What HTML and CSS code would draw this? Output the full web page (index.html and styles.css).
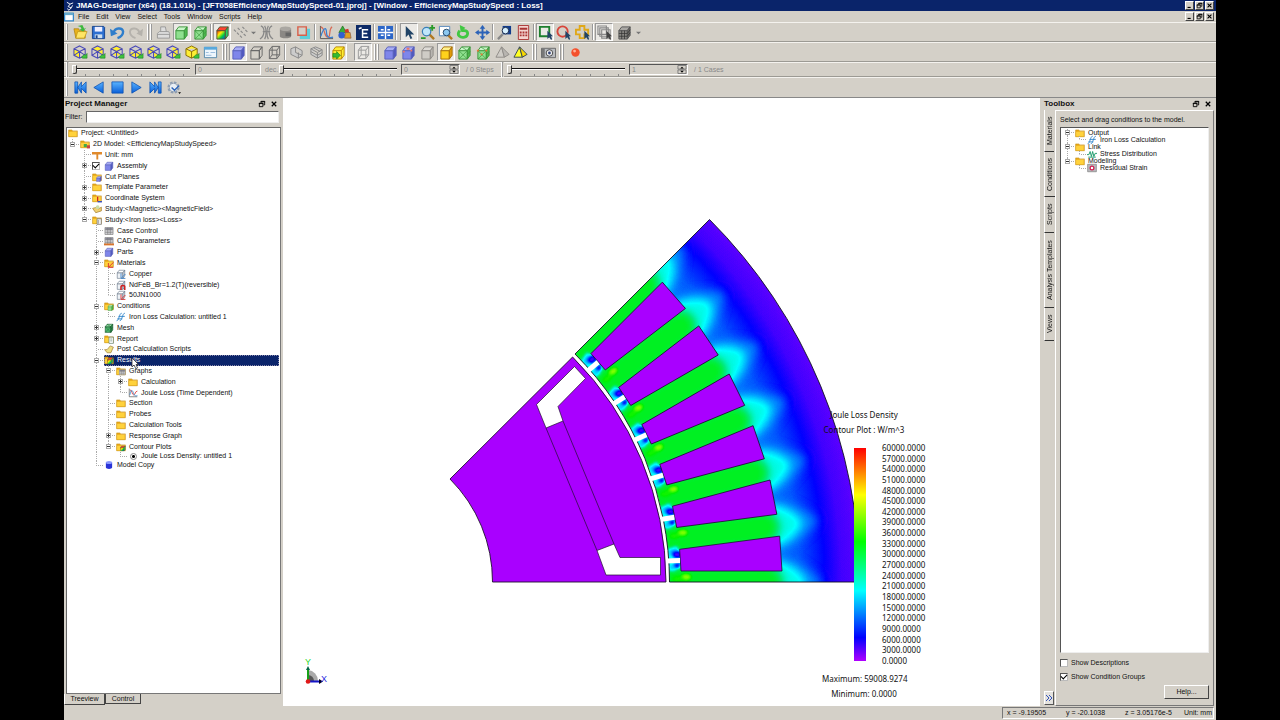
FILE: index.html
```html
<!DOCTYPE html>
<html lang="en">
<head>
<meta charset="utf-8">
<title>JMAG-Designer</title>
<link rel="stylesheet" href="styles.css">
</head>
<body>
<svg class="defs" aria-hidden="true">
  <defs>
    <linearGradient id="rain" x1="0" y1="0" x2="1" y2="1"><stop offset="0" stop-color="#f20"/><stop offset=".35" stop-color="#fe0"/><stop offset=".65" stop-color="#0c4"/><stop offset="1" stop-color="#04f"/></linearGradient>
    <linearGradient id="playfill" x1="0" y1="0" x2="0" y2="1"><stop offset="0" stop-color="#5ab4ff"/><stop offset="1" stop-color="#0a5fd8"/></linearGradient>
    <symbol id="cube" viewBox="0 0 16 16"><g stroke="currentColor" stroke-width="1" stroke-linejoin="round"><path fill="var(--f)" d="M2 6h9v9H2z"/><path fill="var(--t)" d="M2 6l3-4h9l-3 4z"/><path fill="var(--s)" d="M11 6l3-4v9l-3 4z"/></g></symbol>
    <symbol id="xcube" viewBox="0 0 16 16"><g stroke="currentColor" stroke-width="1" stroke-linejoin="round"><path fill="var(--f)" d="M2 6h9v9H2z"/><path fill="var(--t)" d="M2 6l3-4h9l-3 4z"/><path fill="var(--s)" d="M11 6l3-4v9l-3 4z"/><path fill="none" stroke-width=".7" d="M2 6l9 9M11 6l-9 9M5 2l6 4M11 10l3-3"/></g></symbol>
    <symbol id="wire" viewBox="0 0 16 16"><path fill="none" stroke="currentColor" d="M2.500 5.500h8v9h-8zM2.500 5.500l3-4h8l-3 4M13.500 1.500v9l-3 4M5.500 1.500v9h8M5.500 10.500l-3 4"/></symbol>
    <symbol id="hex" viewBox="0 0 16 16"><path fill="none" stroke="#4a4ab8" stroke-width="1.100" d="M7 1l6 3v7l-6 3-6-3V4zM7 7L1 4M7 7l6-3M7 7v7M1 11l6-4 6 4"/><path fill="#3fc43f" stroke="#1c7f1c" stroke-width=".6" d="M9 13l3-3 1 1 2-2v5h-5z"/></symbol>
    <symbol id="folder" viewBox="0 0 16 16"><path fill="#e8a818" d="M1 3h5l2 2h7v9H1z"/><path fill="#ffd23c" d="M1 6h13v8H1z"/><path fill="none" stroke="#c08a10" stroke-width=".8" d="M1 3h5l2 1.500h7V14H1z"/></symbol>
    <symbol id="grid" viewBox="0 0 16 16"><path fill="#d4d4d8" stroke="#777" d="M1.500 2.500h13v11h-13z"/><path fill="#889" d="M2 3h12v3H2z"/><path fill="none" stroke="#777" d="M2 6h12M2 10h12M6 2.500v11M10 2.500v11"/></symbol>
    <symbol id="fcurve" viewBox="0 0 16 16"><path fill="none" stroke="#38c" stroke-width="1.500" d="M1 14c4 0 4-12 8-12M6 14c4 0 4-12 8-12M4 7h10M2 11h8"/></symbol>
    <symbol id="mag" viewBox="0 0 16 16"><path stroke="#b07820" stroke-width="2.500" d="M10 10l5 5"/><circle cx="7" cy="7" r="4.500" fill="#bfe6fa" stroke="#3a7fb8" stroke-width="1.300"/></symbol>
    <symbol id="arrow" viewBox="0 0 16 16"><path fill="#246" d="M4 1v12l3-3 2 5 2-1-2-4h4z"/></symbol>
    <symbol id="cone" viewBox="0 0 16 16"><path fill="var(--f)" stroke="currentColor" d="M7 2L1 13h9z"/><path fill="var(--s)" stroke="currentColor" d="M7 2l3 11 5-3z"/></symbol>
    <symbol id="chart" viewBox="0 0 16 16"><path fill="#fff" d="M2 1h13v12H2z"/><path fill="none" stroke="#444" d="M2 1v13h13"/><path fill="none" stroke="#d33" stroke-width="1.300" d="M3 3c4 0 3 8 6 8s2-6 6-6"/><path fill="none" stroke="#38c" stroke-width="1.300" d="M3 11c2-12 5-6 6-2s4 4 6 3"/></symbol>
    <symbol id="restore" viewBox="0 0 9 9"><path fill="none" stroke="#000" d="M3.500 3V1.500h4v4H6M1.500 3.500h4v4h-4zM3 2h5M1 4h5"/></symbol>
    <symbol id="close" viewBox="0 0 9 9"><path stroke="#000" stroke-width="1.400" d="M2 2l5 5M7 2L2 7"/></symbol>
    <symbol id="min" viewBox="0 0 9 9"><path stroke="#000" stroke-width="1.500" d="M2 7h4"/></symbol>
    <symbol id="spin" viewBox="0 0 10 10"><path fill="#d4d0c8" stroke="#777" d="M.5.5h9v4h-9zM.5 5.500h9v4h-9z"/><path d="M3 4l2-2 2 2zM3 6.500l2 2 2-2z"/></symbol>
  </defs>
</svg>

<div class="app">
  <header class="title">
    <svg class="i10" viewBox="0 0 16 16"><path fill="none" stroke="#fff" stroke-width="1.500" d="M3 2l5 3 5-2M8 5l-3 4 5 2-4 4M12 7l-2 4M4 12l2 3"/></svg>
    <h1>JMAG-Designer (x64) (18.1.01k) - [JFT058EfficiencyMapStudySpeed-01.jproj] - [Window - EfficiencyMapStudySpeed : Loss]</h1>
    <div class="wctl">
      <button aria-label="Minimize"><svg><use href="#min"/></svg></button><button aria-label="Restore"><svg><use href="#restore"/></svg></button><button aria-label="Close"><svg><use href="#close"/></svg></button>
    </div>
  </header>
  <nav class="menu">
    <svg class="i10" viewBox="0 0 16 16"><path fill="#fff" stroke="#38c" stroke-width="2" d="M1 2h14v12H1z"/><path fill="#6ac" d="M1 1h14v4H1z"/></svg>
    <button>File</button><button>Edit</button><button>View</button><button>Select</button><button>Tools</button><button>Window</button><button>Scripts</button><button>Help</button>
    <div class="wctl">
      <button aria-label="Minimize"><svg><use href="#min"/></svg></button><button aria-label="Restore"><svg><use href="#restore"/></svg></button><button aria-label="Close"><svg><use href="#close"/></svg></button>
    </div>
  </nav>

  <div class="bar" role="toolbar" aria-label="Main">
    <i class="handle"></i>
    <div class="grp w74">
      <button aria-label="Open"><svg viewBox="0 0 16 16"><path fill="#e9b21c" stroke="#a87a08" stroke-width=".7" d="M1 4h5l1 2h6v8H3z"/><path fill="#ffe566" stroke="#b98f10" stroke-width=".7" d="M3 14l2-7h10l-3 7z"/><path fill="#3fb93f" d="M5 1l5-1 2 4 2-1-3 4-4-2 2-1-1-2z"/></svg></button>
      <button aria-label="Save"><svg viewBox="0 0 16 16"><path fill="#2c6fd0" stroke="#16428c" d="M1.500 1.500h12l1 1v12h-13z"/><path fill="#eef" d="M4 2h8v5H4z"/><path fill="#cde" d="M4 10h8v4H4z"/><path fill="#16428c" d="M5 11h2v3H5z"/></svg></button>
      <button aria-label="Undo"><svg viewBox="0 0 16 16"><path fill="none" stroke="#2f7ecb" stroke-width="2.500" d="M4 8c1-5 9-6 10-1 0 4-3 6-6 7"/><path fill="#2f7ecb" d="M0 4l1 8 7-3z"/></svg></button>
      <button aria-label="Redo"><svg viewBox="0 0 16 16"><path fill="none" stroke="#b5b2ac" stroke-width="2" d="M12 8C11 3 3 2 2 7c0 4 3 6 6 7"/><path fill="#b5b2ac" d="M16 4l-1 8-6-3z"/></svg></button>
    </div>
    <i class="handle wide"></i>
    <div class="grp w55">
      <button aria-label="Print"><svg viewBox="0 0 16 16"><path fill="#ddd" stroke="#999" d="M5 7V2h5l1 5M1.500 9l2-2h10l1 2v5h-13zM1.500 10h13"/></svg></button>
      <button class="on green" aria-label="Geometry"><svg><use href="#cube"/></svg></button>
      <button class="green" aria-label="Mesh"><svg><use href="#xcube"/></svg></button>
    </div>
    <i class="sep"></i>
    <div class="grp w100">
      <button class="on rain" aria-label="Contour"><svg><use href="#cube"/></svg></button>
      <button aria-label="Vectors"><svg viewBox="0 0 16 16"><path stroke="#888" stroke-width="1.200" stroke-dasharray="3 1.500" d="M1 5l9 9M5 3l9 9M10 2l6 6"/></svg></button>
      <button class="dd" aria-label="More"><svg viewBox="0 0 6 6"><path fill="#777" d="M0 2h6L3 5z"/></svg></button>
      <button aria-label="Flux lines"><svg viewBox="0 0 16 16"><path fill="none" stroke="#888" stroke-width="1.300" d="M2 1c5 2 4 11-1 14M14 1C9 3 10 12 15 15M6 1c2 3 2 11 0 14M10 1c-2 3-2 11 0 14M4 7h8"/></svg></button>
      <button aria-label="Section"><svg viewBox="0 0 16 16"><path fill="#8b8884" d="M2 4v8c0 3 12 3 12 0V4z"/><ellipse cx="8" cy="4" rx="6" ry="2.500" fill="#aaa7a2"/><path fill="#666" d="M8 8h6v4H8z"/></svg></button>
      <button aria-label="Region"><svg viewBox="0 0 16 16"><path fill="#5ecfd8" d="M4 4h11v11H4z"/><path fill="#d4d0c8" stroke="#d8604a" stroke-width="1.500" d="M2 2h9v9H2z"/></svg></button>
    </div>
    <i class="sep"></i>
    <div class="grp w55">
      <button aria-label="Graph"><svg viewBox="0 0 16 16"><path fill="none" stroke="#555" d="M1.500 1v13.500H15"/><path fill="none" stroke="#d86a55" stroke-width="1.300" d="M2 2c5 2 3 10 7 11s1-9 5-11"/><path fill="none" stroke="#3a7fd0" stroke-width="1.300" d="M2 12c3-10 6-10 6-4s4 6 7 5"/></svg></button>
      <button aria-label="Shapes"><svg viewBox="0 0 16 16"><path fill="#38b038" stroke="#176b17" stroke-width=".7" d="M6 1l4 7H2z"/><circle cx="5" cy="11" r="3.500" fill="#3060d0"/><path fill="#d03828" d="M8 5l4-1 1 4-4 1z"/><path fill="#e0a020" stroke="#854" stroke-width=".7" d="M9 8h5l1 6H8z"/></svg></button>
      <button aria-label="Express"><svg viewBox="0 0 16 16"><path fill="#0d2a66" d="M0 0h16v16H0z"/><path fill="none" stroke="#fff" stroke-width="1.600" d="M13 5H7v8h6M7 9h5M3 4l3-1"/></svg></button>
    </div>
    <i class="sep"></i>
    <div class="grp">
      <button aria-label="Fit"><svg viewBox="0 0 16 16"><path fill="#2c66c8" d="M0 1h16v14H0z"/><path fill="none" stroke="#fff" stroke-width="1.500" d="M8 1v14M0 8h16M3 5h3M10 5h3M3 11h3M10 11h3"/></svg></button>
    </div>
    <i class="sep big"></i>
    <div class="grp w91">
      <button class="on" aria-label="Select"><svg><use href="#arrow"/></svg></button>
      <button aria-label="Zoom"><svg viewBox="0 0 16 16"><use href="#mag"/><path stroke="#2a9a2a" stroke-width="2" d="M10 3h6M13 0v6M1 14h5"/></svg></button>
      <button aria-label="Zoom area"><svg viewBox="0 0 16 16"><path fill="#fff" stroke="#58b" d="M1.500 1.500h11v10h-11z"/><path stroke="#b07820" stroke-width="2.500" d="M11 11l4 4"/><circle cx="9" cy="8" r="3.500" fill="#8cc8f0" stroke="#246"/></svg></button>
      <button aria-label="Rotate"><svg viewBox="0 0 16 16"><path fill="none" stroke="#42c842" stroke-width="3" d="M4 6c-4 5 1 8 5 7s5-7 0-7H6"/><path fill="#42c842" d="M4 0l6 3-5 5z"/></svg></button>
      <button aria-label="Pan"><svg viewBox="0 0 16 16"><path fill="#2b62b8" d="M8 0l3 4H9v3h3V5l4 3-4 3V9H9v3h2l-3 4-3-4h2V9H4v2L0 8l4-3v2h3V4H5z"/></svg></button>
    </div>
    <i class="sep"></i>
    <div class="grp w37">
      <button aria-label="Probe"><svg viewBox="0 0 16 16"><path fill="#123c8c" d="M6 1h9v9H6z"/><path stroke="#888" stroke-width="2.500" d="M6 10l-5 5"/><circle cx="9" cy="6" r="3.500" fill="#d6f0ff" stroke="#124"/></svg></button>
      <button aria-label="Calculator"><svg viewBox="0 0 16 16"><path fill="#f3d3cf" stroke="#a33" d="M2.500.5h11v15h-11z"/><path fill="#a33" d="M4 3h8v2H4zM4 7h2v2H4zM7 7h2v2H7zM10 7h2v2h-2zM4 10h2v2H4zM7 10h2v2H7zM10 10h2v2h-2z"/></svg></button>
    </div>
    <i class="sep"></i>
    <div class="grp w55">
      <button class="on" aria-label="Box select"><svg viewBox="0 0 16 16"><path fill="none" stroke="#1d7f2e" stroke-width="2" d="M2 2h10v10H2z"/><path fill="#246" d="M10 6v9l2-2 2 3 1-1-1-3h2z"/></svg></button>
      <button aria-label="Circle select"><svg viewBox="0 0 16 16"><circle cx="7" cy="7" r="5.500" fill="none" stroke="#d8453a" stroke-width="2"/><path fill="#246" d="M10 6v9l2-2 2 3 1-1-1-3h2z"/></svg></button>
      <button aria-label="Polygon select"><svg viewBox="0 0 16 16"><path fill="none" stroke="#e0a818" stroke-width="2" d="M5 1h5v4h4v5h-4v4H5v-4H1V5h4z"/><path fill="#246" d="M10 6v9l2-2 2 3 1-1-1-3h2z"/></svg></button>
    </div>
    <i class="sep"></i>
    <div class="grp w46">
      <button class="on" aria-label="Visible only"><svg viewBox="0 0 16 16"><path fill="none" stroke="#888" stroke-width="1.200" d="M1 1h9v9H1zM3 3h9v9H3zM5 5h9v9H5z"/><path fill="#444" d="M10 6v9l2-2 2 3 1-1-1-3h2z"/></svg></button>
      <button class="dark" aria-label="Mesh view"><svg viewBox="0 0 16 16"><use href="#cube"/><path fill="none" stroke="#333" stroke-width=".8" d="M2 9h9l3-4M2 12h9l3-4M5 6v9M8 6v9"/></svg></button>
      <button class="dd" aria-label="More"><svg viewBox="0 0 6 6"><path fill="#777" d="M0 2h6L3 5z"/></svg></button>
    </div>
  </div>

  <div class="bar" role="toolbar" aria-label="View">
    <i class="handle"></i>
    <div class="grp w149">
      <button aria-label="Front"><svg viewBox="0 0 16 16"><path fill="#fe3" d="M1 4l6 3 6-3v7l-6 3V7v7l-6-3z"/><path fill="#d4d0c8" d="M7 7l6-3v7l-6 3z"/><use href="#hex"/></svg></button>
      <button aria-label="Back"><svg viewBox="0 0 16 16"><path fill="#fe3" d="M7 1l6 3v7L7 7 1 4z"/><use href="#hex"/></svg></button>
      <button aria-label="Top"><svg viewBox="0 0 16 16"><path fill="#fe3" d="M7 1l6 3-6 3-6-3zM3 10l4-3 4 3-4 2z"/><use href="#hex"/></svg></button>
      <button aria-label="Bottom"><svg viewBox="0 0 16 16"><path fill="#fe3" d="M1 11V8l6-1 6 1v3l-6 3z"/><use href="#hex"/></svg></button>
      <button aria-label="Left"><svg viewBox="0 0 16 16"><path fill="#fe3" d="M7 1v6l6 4-6 3V7l-6 4V4z"/><use href="#hex"/></svg></button>
      <button aria-label="Right"><svg viewBox="0 0 16 16"><path fill="#fe3" d="M7 2l6 2v7l-6 3z"/><use href="#hex"/></svg></button>
      <button aria-label="Isometric"><svg viewBox="0 0 16 16"><path fill="#fe3" stroke="#886b00" d="M7 1l6 3v7l-6 3-6-3V4zM1 4l6 3 6-3M7 7v7"/><path fill="#3fc43f" stroke="#1c7f1c" stroke-width=".6" d="M9 13l3-3 1 1 2-2v5h-5z"/></svg></button>
      <button aria-label="View list"><svg viewBox="0 0 16 16"><path fill="#eef6fc" stroke="#58a" d="M1.500 2.500h13v11h-13z"/><path fill="#58a8dc" d="M1 2h14v3H1z"/><path stroke="#9bd" d="M3 8h3M8 8h5M3 11h6"/></svg></button>
    </div>
    <i class="handle wide"></i>
    <div class="grp w54">
      <button class="on blue" aria-label="Shaded"><svg><use href="#cube"/></svg></button>
      <button class="clear" aria-label="Hidden line"><svg><use href="#cube"/></svg></button>
      <button class="clear" aria-label="Wireframe"><svg><use href="#wire"/></svg></button>
    </div>
    <i class="sep"></i>
    <div class="grp w38">
      <button class="gray" aria-label="Clip"><svg viewBox="0 0 16 16"><path fill="#ccc" stroke="#888" d="M2 4l5-2 7 4v5l-4 3-8-4zM7 2v6l7 3M10 8v6"/></svg></button>
      <button class="gray" aria-label="Clip mesh"><svg viewBox="0 0 16 16"><path fill="#ccc" stroke="#888" d="M2 4l5-2 7 3v6l-5 3-7-4zM2 4l7 4 5-3M9 8v6M2 7l7 4 5-3M5 3l7 4"/></svg></button>
    </div>
    <i class="sep"></i>
    <div class="grp w43">
      <button class="on" aria-label="Highlight"><svg viewBox="0 0 16 16"><path fill="#fe3" stroke="#b80" d="M2 6l3-4h9v9l-3 4H2zM11 6l3-4M2 6h9v9"/><path fill="#3b3" stroke="#171" stroke-width=".6" d="M2 9h4V7l4 4-4 4v-2H2z"/></svg></button>
      <button class="on clear faint" aria-label="Transparent"><svg><use href="#wire"/></svg></button>
    </div>
    <i class="handle wide"></i>
    <div class="grp w149">
      <button class="blue" aria-label="Solid"><svg><use href="#cube"/></svg></button>
      <button class="blue" aria-label="Face"><svg viewBox="0 0 16 16"><use href="#cube"/><path fill="#e76" d="M2 6h2v2H2zM10 5h2v2h-2zM6 3h3v2H6z"/></svg></button>
      <button class="gray" aria-label="Edge"><svg><use href="#cube"/></svg></button>
      <button class="on yellow" aria-label="Part"><svg><use href="#cube"/></svg></button>
      <button class="green" aria-label="Element"><svg><use href="#xcube"/></svg></button>
      <button class="green" aria-label="Node"><svg viewBox="0 0 16 16"><use href="#xcube"/><path fill="#e73" d="M1 5h2v2H1zM10 5h2v2h-2zM5 9h2v2H5z"/></svg></button>
      <button class="gray" aria-label="Cone"><svg><use href="#cone"/></svg></button>
      <button class="cone" aria-label="Cone solid"><svg><use href="#cone"/></svg></button>
    </div>
    <i class="handle wide"></i>
    <div class="grp">
      <button aria-label="Capture"><svg viewBox="0 0 16 16"><path fill="#b9bcc0" stroke="#666" d="M.5 3.500h15v10H.5z"/><path fill="#777" d="M1 4h3v9H1z"/><circle cx="9" cy="8.500" r="3.500" fill="#eee" stroke="#444"/><circle cx="9" cy="8.500" r="1.500" fill="#347"/></svg></button>
    </div>
    <i class="handle wide"></i>
    <div class="grp">
      <button aria-label="Record"><svg viewBox="0 0 16 16"><circle cx="8" cy="8" r="4.500" fill="#f4512c"/><circle cx="7" cy="6.500" r="1.500" fill="#ffb39a"/></svg></button>
    </div>
  </div>

  <div class="bar sliders">
    <i class="handle"></i>
    <input type="range" class="w118" value="0" aria-label="Angle">
    <input type="text" class="num w66" value="0" aria-label="Angle value" disabled>
    <span class="unit u1">dec.</span>
    <input type="range" class="w118" value="0" aria-label="Step">
    <span class="spin"><input type="text" class="num" value="0" aria-label="Step value" disabled><svg><use href="#spin"/></svg></span>
    <span class="unit u2">/ 0 Steps</span>
    <i class="handle"></i>
    <input type="range" class="w118" value="0" aria-label="Case">
    <span class="spin"><input type="text" class="num" value="1" aria-label="Case value" disabled><svg><use href="#spin"/></svg></span>
    <span class="unit u2">/ 1 Cases</span>
  </div>

  <div class="bar play" role="toolbar" aria-label="Animation">
    <i class="handle"></i>
    <div class="grp w112">
      <button aria-label="First"><svg viewBox="0 0 16 16"><path fill="url(#playfill)" stroke="#0a4fb0" stroke-width=".8" d="M2 2h3v12H2zM14 2v12L9 9v5L5 8l4-6v5z"/></svg></button>
      <button aria-label="Reverse"><svg viewBox="0 0 16 16"><path fill="url(#playfill)" stroke="#0a4fb0" stroke-width=".8" d="M13 2v12L3 8z"/></svg></button>
      <button aria-label="Stop"><svg viewBox="0 0 16 16"><path fill="url(#playfill)" stroke="#0a4fb0" stroke-width=".8" d="M2 2h12v12H2z"/></svg></button>
      <button aria-label="Play"><svg viewBox="0 0 16 16"><path fill="url(#playfill)" stroke="#0a4fb0" stroke-width=".8" d="M3 2v12l10-6z"/></svg></button>
      <button aria-label="Last"><svg viewBox="0 0 16 16"><path fill="url(#playfill)" stroke="#0a4fb0" stroke-width=".8" d="M14 2h-3v12h3zM2 2v12l5-5v5l4-6-4-6v5z"/></svg></button>
      <button aria-label="Settings"><svg viewBox="0 0 16 16"><circle cx="8" cy="8" r="5" fill="#dfe6ee" stroke="#8d9cb0" stroke-width="3" stroke-dasharray="2.500 1.400"/><circle cx="8" cy="8" r="4.500" fill="#e8eef4" stroke="#8d9cb0"/><path fill="none" stroke="#2a62b8" stroke-width="1.500" d="M6 8l3 3 5-5"/><path d="M13 13h3l-1.500 2z"/></svg></button>
    </div>
  </div>

  <main class="work">
    <section class="left">
      <div class="phead"><h2>Project Manager</h2><button aria-label="Float"><svg><use href="#restore"/></svg></button><button aria-label="Close"><svg><use href="#close"/></svg></button></div>
      <div class="filter"><label for="filter">Filter:</label><input id="filter" type="text"></div>
      <div class="treebox">
        <ul class="tree">
          <li><svg><use href="#folder"/></svg>Project: &lt;Untitled&gt;</li>
          <li><button class="c l m" aria-label="Collapse"></button><svg viewBox="0 0 16 16"><use href="#folder"/><path fill="#4a4" d="M6 8h5v5H6z"/><path fill="#c44" d="M11 10h5v5h-5z"/></svg>2D Model: &lt;EfficiencyMapStudySpeed&gt;</li>
          <li><i class="c"></i><i class="c t"></i><svg viewBox="0 0 16 16"><path fill="#e08a2c" d="M0 3h16v4h-6v8H7V7H0z"/></svg>Unit: mm</li>
          <li><i class="c"></i><button class="c t p" aria-label="Expand"></button><input type="checkbox" id="asm" checked><svg class="blue"><use href="#cube"/></svg><label for="asm">Assembly</label></li>
          <li><i class="c"></i><i class="c t"></i><svg viewBox="0 0 16 16" class="blue"><use href="#folder"/><use href="#cube" x="6" y="6" width="10" height="10"/></svg>Cut Planes</li>
          <li><i class="c"></i><button class="c t p" aria-label="Expand"></button><svg><use href="#folder"/></svg>Template Parameter</li>
          <li><i class="c"></i><button class="c t p" aria-label="Expand"></button><svg viewBox="0 0 16 16"><use href="#folder"/><path stroke="#c22" stroke-width="2" d="M9 6v7"/><path stroke="#24c" stroke-width="2" d="M9 14h7"/></svg>Coordinate System</li>
          <li><i class="c"></i><button class="c t p" aria-label="Expand"></button><svg viewBox="0 0 16 16"><path fill="#f0d070" stroke="#987020" d="M1 7l5 7 9-3V5l-5 3-2-3z"/><circle cx="9" cy="5" r="3" fill="#cda"/></svg>Study:&lt;Magnetic&gt;&lt;MagneticField&gt;</li>
          <li><i class="c"></i><button class="c l m" aria-label="Collapse"></button><svg viewBox="0 0 16 16"><use href="#folder"/><path fill="#eee" stroke="#666" d="M8 6h7v9H8zM10 8v6"/></svg>Study:&lt;Iron loss&gt;&lt;Loss&gt;</li>
          <li><i class="c"></i><i class="c"></i><i class="c t"></i><svg><use href="#grid"/></svg>Case Control</li>
          <li><i class="c"></i><i class="c"></i><i class="c t"></i><svg viewBox="0 0 16 16"><use href="#grid"/><path fill="#d8742c" d="M0 12h16v3H0z"/></svg>CAD Parameters</li>
          <li><i class="c"></i><i class="c"></i><button class="c t p" aria-label="Expand"></button><svg class="blue"><use href="#cube"/></svg>Parts</li>
          <li><i class="c"></i><i class="c"></i><button class="c t m" aria-label="Collapse"></button><svg viewBox="0 0 16 16"><use href="#folder"/><path fill="none" stroke="#d33" stroke-width="1.500" d="M7 15l8-8M7 8v7h8"/></svg>Materials</li>
          <li><i class="c"></i><i class="c"></i><i class="c v"></i><i class="c t"></i><svg viewBox="0 0 16 16" class="pale"><use href="#cube"/><path fill="none" stroke="#48c" stroke-width="1.500" d="M8 7v8h7M9 14l6-6"/></svg>Copper</li>
          <li><i class="c"></i><i class="c"></i><i class="c v"></i><i class="c t"></i><svg viewBox="0 0 16 16" class="pale"><use href="#cube"/><path fill="none" stroke="#c22" stroke-width="2.500" d="M8 16v-5c0-3 6-3 6 0v5"/></svg>NdFeB_Br=1.2(T)(reversible)</li>
          <li><i class="c"></i><i class="c"></i><i class="c v"></i><i class="c l"></i><svg viewBox="0 0 16 16" class="pale"><use href="#cube"/><path fill="none" stroke="#d33" stroke-width="1.500" d="M8 7v8h7M9 14l6-6"/></svg>50JN1000</li>
          <li><i class="c"></i><i class="c"></i><button class="c t m" aria-label="Collapse"></button><svg viewBox="0 0 16 16" class="green"><use href="#folder"/><use href="#cube" x="5" y="5" width="11" height="11"/></svg>Conditions</li>
          <li><i class="c"></i><i class="c"></i><i class="c v"></i><i class="c l"></i><svg><use href="#fcurve"/></svg>Iron Loss Calculation: untitled 1</li>
          <li><i class="c"></i><i class="c"></i><button class="c t p" aria-label="Expand"></button><svg class="mesh"><use href="#xcube"/></svg>Mesh</li>
          <li><i class="c"></i><i class="c"></i><button class="c t p" aria-label="Expand"></button><svg viewBox="0 0 16 16"><use href="#folder"/><path fill="#fff" stroke="#576" d="M8 5h7v10H8zM10 8h3M10 11h3"/></svg>Report</li>
          <li><i class="c"></i><i class="c"></i><i class="c t"></i><svg viewBox="0 0 16 16"><path fill="#f0e080" stroke="#987020" d="M1 9l4 5h6l4-9-5-2-5 6z"/></svg>Post Calculation Scripts</li>
          <li class="sel"><i class="c"></i><i class="c"></i><button class="c t m" aria-label="Collapse"></button><b><svg viewBox="0 0 16 16" class="rain"><use href="#folder"/><use href="#cube" x="4" y="3" width="12" height="12"/></svg>Results</b><svg class="cursor" viewBox="0 0 8 13"><path fill="#fff" stroke="#333" stroke-width=".8" d="M1 1v9l2-2 2 4 1.500-1L5 7.500h2.500z"/></svg></li>
          <li><i class="c"></i><i class="c"></i><i class="c v"></i><button class="c t m" aria-label="Collapse"></button><svg viewBox="0 0 16 16"><use href="#folder"/><use href="#grid" x="4" y="4" width="12" height="12"/></svg>Graphs</li>
          <li><i class="c"></i><i class="c"></i><i class="c v"></i><i class="c v"></i><button class="c t p" aria-label="Expand"></button><svg><use href="#folder"/></svg>Calculation</li>
          <li><i class="c"></i><i class="c"></i><i class="c v"></i><i class="c v"></i><i class="c l"></i><svg><use href="#chart"/></svg>Joule Loss (Time Dependent)</li>
          <li><i class="c"></i><i class="c"></i><i class="c v"></i><i class="c t"></i><svg><use href="#folder"/></svg>Section</li>
          <li><i class="c"></i><i class="c"></i><i class="c v"></i><i class="c t"></i><svg><use href="#folder"/></svg>Probes</li>
          <li><i class="c"></i><i class="c"></i><i class="c v"></i><i class="c t"></i><svg><use href="#folder"/></svg>Calculation Tools</li>
          <li><i class="c"></i><i class="c"></i><i class="c v"></i><button class="c t p" aria-label="Expand"></button><svg><use href="#folder"/></svg>Response Graph</li>
          <li><i class="c"></i><i class="c"></i><i class="c v"></i><button class="c l m" aria-label="Collapse"></button><svg viewBox="0 0 16 16" class="rain"><use href="#folder"/><use href="#cube" x="6" y="5" width="10" height="10"/></svg>Contour Plots</li>
          <li class="short"><i class="c"></i><i class="c"></i><i class="c v"></i><i class="c"></i><i class="c l"></i><input type="radio" id="jld" checked><label for="jld">Joule Loss Density: untitled 1</label></li>
          <li class="short"><i class="c"></i><i class="c"></i><i class="c l"></i><svg viewBox="0 0 16 16"><path fill="#2a34d8" d="M3 4v8c0 3 10 3 10 0V4z"/><ellipse cx="8" cy="4" rx="5" ry="2.500" fill="#8a98ff"/></svg>Model Copy</li>
        </ul>
      </div>
      <div class="ltabs"><button class="cur">Treeview</button><button>Control</button></div>
    </section>

    <section class="stage">
      <svg class="plot" viewBox="283 98 757 608" preserveAspectRatio="xMinYMin meet" role="img" aria-label="Joule loss density contour plot">
        <defs>
          <filter id="ramp" x="0" y="0" width="1" height="1" color-interpolation-filters="sRGB">
            <feComponentTransfer>
              <feFuncR type="table" tableValues=".69 0 0 0 0 0 .5 1 1 1"/>
              <feFuncG type="table" tableValues="0 0 .5 1 .92 .95 1 1 .5 0"/>
              <feFuncB type="table" tableValues="1 1 1 1 .5 0 0 0 0 0"/>
            </feComponentTransfer>
          </filter>
          <filter id="soft" x="-20%" y="-20%" width="140%" height="140%" color-interpolation-filters="sRGB"><feGaussianBlur stdDeviation="5"/></filter>
          <filter id="fine" x="-20%" y="-20%" width="140%" height="140%" color-interpolation-filters="sRGB"><feGaussianBlur stdDeviation="1.800"/></filter>
          <radialGradient id="yoke" gradientUnits="userSpaceOnUse" cx="347" cy="582" r="520">
            <stop offset=".83" stop-color="#383838"/><stop offset=".87" stop-color="#303030"/><stop offset=".895" stop-color="#262626"/><stop offset=".92" stop-color="#1c1c1c"/><stop offset=".95" stop-color="#121212"/><stop offset="1" stop-color="#0c0c0c"/>
          </radialGradient>
          <clipPath id="core"><path d="M669.500 582A322.500 322.500 0 0 0 575 354L709.500 219.500A512.600 512.600 0 0 1 859.600 582z"/></clipPath>
          <g id="tooth"><path fill="#3a3a3a" d="M776 556l22 6 16 11 8 9-8 9-16 11-22 6z"/><path fill="#5a5a5a" d="M772 560l14 3 10 6 8 8 2 5-2 5-8 8-10 6-14 3z"/><path fill="#868686" d="M660 564h108l10 6 6 12-6 12-10 6H660z"/></g>
          <g id="tip"><ellipse cx="686" cy="577" rx="5" ry="3" fill="#acacac"/><ellipse cx="678" cy="579" rx="6" ry="3" fill="#929292"/><path fill="#4c4c4c" d="M667 549l10-3 4 10-13 2zM668 564l12-1-5 8h-6z"/><path fill="#101010" d="M672 552l9-1v7h-7zM673 564l8-1-3 6z"/></g>
          <g id="slot"><path fill="#a900ff" stroke="#201030" stroke-width=".8" d="M679.600 549.300L779.700 536.100 782 571H681z"/><path fill="#fff" d="M666 558.500l14-.5v5l-14 .5z"/></g>
        </defs>
        <g clip-path="url(#core)">
          <g filter="url(#ramp)">
            <path fill="url(#yoke)" d="M540 190h340v420H540z"/>
            <g filter="url(#soft)">
              <use href="#tooth"/><use href="#tooth" transform="rotate(-7.500 347 582)"/><use href="#tooth" transform="rotate(-15 347 582)"/><use href="#tooth" transform="rotate(-22.500 347 582)"/><use href="#tooth" transform="rotate(-30 347 582)"/><use href="#tooth" transform="rotate(-37.500 347 582)"/><use href="#tooth" transform="rotate(-45 347 582)"/>
            </g>
            <g filter="url(#fine)">
              <use href="#tip"/><use href="#tip" transform="rotate(-7.500 347 582)"/><use href="#tip" transform="rotate(-15 347 582)"/><use href="#tip" transform="rotate(-22.500 347 582)"/><use href="#tip" transform="rotate(-30 347 582)"/><use href="#tip" transform="rotate(-37.500 347 582)"/>
            </g>
          </g>
        </g>
        <path fill="none" stroke="#112" stroke-width=".9" d="M669.500 582A322.500 322.500 0 0 0 575 354L709.500 219.500A512.600 512.600 0 0 1 859.600 582z"/>
        <use href="#slot"/><use href="#slot" transform="rotate(-7.500 347 582)"/><use href="#slot" transform="rotate(-15 347 582)"/><use href="#slot" transform="rotate(-22.500 347 582)"/><use href="#slot" transform="rotate(-30 347 582)"/><use href="#slot" transform="rotate(-37.500 347 582)"/>
        <path fill="#a900ff" stroke="#201030" stroke-width=".9" d="M492.500 582A145.500 145.500 0 0 0 450 479L572.600 357A319 319 0 0 1 666 582z"/>
        <g stroke="#201030" stroke-width=".7" fill="#fff">
          <path d="M546 428l51 122.500M563 421l51 123"/>
          <path d="M574.500 366.500l11 12L558 406.500l5 14.500-17 7-9.500-23.500zM597 550.500l17-6.500 6 13.500h40.500V575H606z"/>
        </g>
        <g>
          <path fill="#aaa" d="M308 681v-11a11 11 0 0 1 10 11z"/><path fill="#555" d="M308 681v-6a6 6 0 0 1 6 6z"/>
          <path stroke="#17a017" stroke-width="2" d="M308 681v-12"/><path fill="#064" d="M306 670h4l-2-4z"/>
          <path stroke="#1414c8" stroke-width="2" d="M308 681.500h12"/><path fill="#002" d="M319 679v5l4-2.500z"/>
          <circle cx="308" cy="681.500" r="2.300" fill="#e01818"/>
          <text x="305" y="665" class="ax" fill="#2fd82f">Y</text><text x="321" y="682" class="ax" fill="#2a2ae0">X</text>
        </g>
      </svg>
      <div class="legend">
        <p>Joule Loss Density</p>
        <p>Contour Plot : W/m^3</p>
        <div class="scale">
          <i class="ramp"></i>
          <ol><li>60000.0000</li><li>57000.0000</li><li>54000.0000</li><li>51000.0000</li><li>48000.0000</li><li>45000.0000</li><li>42000.0000</li><li>39000.0000</li><li>36000.0000</li><li>33000.0000</li><li>30000.0000</li><li>27000.0000</li><li>24000.0000</li><li>21000.0000</li><li>18000.0000</li><li>15000.0000</li><li>12000.0000</li><li>9000.0000</li><li>6000.0000</li><li>3000.0000</li><li>0.0000</li></ol>
        </div>
        <p>Maximum: 59008.9274</p>
        <p>Minimum: 0.0000</p>
      </div>
    </section>

    <section class="right">
      <div class="phead"><h2>Toolbox</h2><button aria-label="Float"><svg><use href="#restore"/></svg></button><button aria-label="Close"><svg><use href="#close"/></svg></button></div>
      <div class="dock">
        <div class="vtabs">
          <button class="h42">Materials</button><button class="h45 cur">Conditions</button><button class="h36">Scripts</button><button class="h75">Analysis Templates</button><button class="h33">Views</button>
          <button class="more" aria-label="More"><svg viewBox="0 0 8 8"><path fill="none" stroke="#35b" d="M1 1l3 3-3 3M4 1l3 3-3 3"/></svg></button>
        </div>
        <div class="pane">
          <p>Select and drag conditions to the model.</p>
          <div class="cbox">
            <ul class="ctree">
              <li><button class="c t m" aria-label="Collapse"></button><svg><use href="#folder"/></svg>Output</li>
              <li><i class="c v"></i><i class="c l"></i><svg><use href="#fcurve"/></svg>Iron Loss Calculation</li>
              <li><button class="c t m" aria-label="Collapse"></button><svg><use href="#folder"/></svg>Link</li>
              <li><i class="c v"></i><i class="c l"></i><svg viewBox="0 0 16 16"><path fill="none" stroke="#1a9a6a" stroke-width="1.500" d="M0 9h3l2-5 2 8 2-8 2 8 2-5h3M2 13h12"/></svg>Stress Distribution</li>
              <li><button class="c l m" aria-label="Collapse"></button><svg><use href="#folder"/></svg>Modeling</li>
              <li><i class="c"></i><i class="c l"></i><svg viewBox="0 0 16 16"><path fill="#b8b8bc" stroke="#777" d="M1 2h14v12H1z"/><circle cx="8" cy="8" r="3" fill="#fff" stroke="#d02050" stroke-width="2"/></svg>Residual Strain</li>
            </ul>
          </div>
          <label class="opt"><input type="checkbox">Show Descriptions</label>
          <label class="opt"><input type="checkbox" checked>Show Condition Groups</label>
          <button class="help">Help...</button>
        </div>
      </div>
    </section>
  </main>

  <footer class="status"><div class="coords"><span>x = -9.19505</span><span>y = -20.1038</span><span>z = 3.05176e-5</span><span>Unit: mm</span></div></footer>
</div>
</body>
</html>
```
FILE: styles.css
```css
* { box-sizing: border-box; margin: 0; padding: 0; }
body { background: #000; color: #111; font: 7px/10px "Liberation Sans", Arial, sans-serif; }
button, input { font: inherit; color: inherit; }
button { background: none; border: 0; }
ul, ol { list-style: none; }
.defs { position: absolute; width: 0; height: 0; }
.app { margin: 0 5%; min-height: 100vh; display: flex; flex-direction: column; background: #d4d0c8; }

.title, .menu { display: flex; align-items: center; height: 11px; padding: 0 2px 0 1px; }
.title { background: #0a246a; color: #fff; }
.title h1 { font-size: 8px; line-height: 10px; flex: 1; margin-left: 1px; white-space: nowrap; overflow: hidden; }
.i10 { width: 10px; height: 10px; flex: none; }
.menu { gap: 7px; padding-left: 0; }
.menu > button:first-of-type { margin-left: -3px; }
.wctl { display: flex; margin-left: auto; gap: 1px; }
.wctl button { width: 9px; height: 9px; background: #d4d0c8; border: 1px solid; border-color: #fff #444 #444 #fff; display: flex; }
.wctl svg { width: 100%; height: 100%; }

.bar { display: flex; align-items: center; height: 20px; border-top: 1px solid #f4f2ee; border-bottom: 1px solid #9c9a94; }
.handle { width: 7px; height: 16px; flex: none; border: solid; border-width: 0 2px; border-color: transparent; background: linear-gradient(90deg, #fff 1px, #999 1px 2px, #d4d0c8 2px) no-repeat 0 0 / 3px 100%; }
.handle.wide { width: 9px; background-size: 6px 100%; background-image: linear-gradient(90deg, #fff 1px, #999 1px 2px, #d4d0c8 2px 3px, #fff 3px 4px, #999 4px 5px, #d4d0c8 5px); }
.sep { width: 4px; height: 16px; flex: none; background: linear-gradient(#999, #999) no-repeat 1px 0 / 1px 100%, linear-gradient(#fff, #fff) no-repeat 2px 0 / 1px 100%; }
.sep.big { width: 6px; }
.grp { display: flex; justify-content: space-between; flex: none; }
.grp button { width: 18px; height: 18px; display: flex; align-items: center; justify-content: center; border: 1px solid transparent; }
.grp button svg { width: 15px; height: 15px; flex: none; }
.grp .on { background: #ebe9e5; border-color: #999 #fff #fff #999; }
.grp button.dd { width: 6px; }
.grp .dd svg { width: 5px; height: 5px; }
.w37 { width: 37px; } .w38 { width: 38px; } .w43 { width: 43px; } .w46 { width: 46px; } .w54 { width: 54px; } .w55 { width: 55px; }
.w66 { width: 66px; } .w74 { width: 74px; } .w91 { width: 91px; } .w100 { width: 100px; } .w112 { width: 112px; } .w118 { width: 118px; } .w149 { width: 149px; }

.green { --f: #8fe08f; --t: #c8f5c8; --s: #4db84d; color: #3c963c; }
.mesh { --f: #4fb870; --t: #8fe0a0; --s: #2d8a4a; color: #14552a; }
.blue { --f: #7f86ea; --t: #a9aef5; --s: #5058c0; color: #5a62bc; }
.yellow { --f: #ffd21c; --t: #fff08a; --s: #e09a08; color: #a87008; }
.gray { --f: #cfccc6; --t: #dedbd6; --s: #b8b5b0; color: #8f8c88; }
.dark { --f: #8a8884; --t: #aaa8a4; --s: #6a6864; color: #555; }
.clear { --f: none; --t: none; --s: none; color: #666; }
.faint { color: #999; }
.pale { --f: #eef2f6; --t: #fff; --s: #cdd6e0; color: #678; }
.rain { --f: url(#rain); --t: #f43; --s: #2c6; color: #553; }
.cone { --f: #ff2; --s: #f8d800; color: #345; }

.sliders { height: 15px; color: #888; }
.num { height: 11px; min-width: 0; background: #d4d0c8; border: 1px solid; border-color: #555 #fff #fff #555; padding: 0 2px; color: #888; }
.spin { width: 59px; display: flex; align-items: center; border: 1px solid; border-color: #555 #fff #fff #555; height: 11px; margin-left: 4px; }
.spin .num { width: 100%; height: 9px; border: 0; }
.spin svg { width: 10px; height: 9px; flex: none; }
.num.w66 { margin-left: 5px; }
.unit { white-space: pre; padding-left: 4px; }
.u1 { width: 17px; } .u2 { width: 39px; padding-left: 6px; }
input[type=range] { appearance: none; height: 13px; margin-left: 1px; background: linear-gradient(#111, #111) no-repeat 4px 5px / 100% 1px, linear-gradient(#fff, #fff) no-repeat 4px 6px / 100% 1px, repeating-linear-gradient(90deg, transparent 0 13px, #888 13px 14px) no-repeat 0 100% / 100% 2px; }
input[type=range]::-webkit-slider-thumb { appearance: none; width: 5px; height: 9px; background: #d4d0c8; border: 1px solid; border-color: #fff #333 #333 #fff; border-radius: 0 0 3px 3px; }
.play { height: 21px; border-bottom-color: #888; }

.work { flex: 1; display: flex; min-height: 0; }
.left { width: 219px; flex: none; display: flex; flex-direction: column; }
.phead { display: flex; align-items: center; height: 12px; padding: 0 3px 0 1px; }
.phead h2 { font-size: 8px; line-height: 10px; flex: 1; }
.phead button { width: 12px; height: 9px; display: flex; justify-content: center; }
.phead svg { width: 8px; height: 8px; }
.filter { display: flex; align-items: center; gap: 3px; height: 14px; padding: 0 4px 0 1px; }
.filter input { flex: 1; min-width: 0; height: 12px; border: 1px solid; border-color: #666 #eee #eee #666; background: #fff; }
.treebox { flex: 1; margin: 3px 2px 0; background: #fff; border: 1px solid; border-color: #666 #777 #777 #666; }
.tree { display: flex; flex-direction: column; height: 342px; padding-left: 1px; }
.tree li { flex: 1; display: flex; align-items: center; white-space: nowrap; position: relative; min-height: 0; }
.tree .short { flex: 0 0 9px; }
.tree li > svg, .tree b > svg { width: 10px; height: 10px; margin-right: 3px; flex: none; }
.tree input, .opt input { appearance: none; width: 8px; height: 8px; border: 1px solid; border-color: #555 #bbb #bbb #555; background: #fff; flex: none; display: grid; place-items: center; }
.tree input { margin-right: 4px; }
input[type=checkbox]:checked::after { content: ""; width: 5px; height: 3px; border: solid #000; border-width: 0 0 1px 1px; transform: rotate(-45deg); margin-bottom: 2px; }
.tree input[type=radio] { width: 7px; height: 7px; margin: 0 4px 0 2px; border-color: #888; border-radius: 50%; background: radial-gradient(#000 0 1px, #fff 2px); }
.tree .sel b { flex: 1; align-self: stretch; display: flex; align-items: center; font-weight: normal; background: #0a246a; color: #fff; outline: 1px dotted #88a; outline-offset: -1px; margin-right: 1px; }
.tree .cursor { position: absolute; left: 63px; top: 2px; width: 8px; height: 13px; z-index: 1; margin: 0; }
.c { width: 12px; align-self: stretch; flex: none; background-repeat: no-repeat; }
.v { background-image: repeating-linear-gradient(#aaa 0 1px, #fff 1px 2px); background-size: 1px 100%; background-position: 4px 0; }
.t, .l { background-image: repeating-linear-gradient(#aaa 0 1px, #fff 1px 2px), repeating-linear-gradient(90deg, #aaa 0 1px, #fff 1px 2px); background-position: 4px 0, 4px 50%; background-size: 1px 100%, 7px 1px; }
.l { background-size: 1px 50%, 7px 1px; }
.m, .p { display: flex; align-items: center; padding-left: 2px; }
.m::after, .p::after { content: ""; box-sizing: border-box; width: 5px; height: 5px; border: 1px solid #aaa; background: linear-gradient(#333, #333) no-repeat center / 3px 1px, #fff; }
.p::after { background: linear-gradient(#333, #333) no-repeat center / 3px 1px, linear-gradient(#333, #333) no-repeat center / 1px 3px, #fff; }
.ltabs { display: flex; height: 12px; align-items: flex-start; }
.ltabs button { height: 10px; width: 36px; border: 1px solid #444; border-top: 0; line-height: 8px; }
.ltabs .cur { width: 41px; height: 11px; border-left-color: #fff; }

.stage { flex: 1; min-width: 0; background: #fff; position: relative; overflow: hidden; }
.plot { position: absolute; left: 0; top: 0; width: 757px; height: 608px; }
.ax { font: 9px "Liberation Sans", sans-serif; }
.legend { position: absolute; left: 539px; top: 309px; width: 110px; font: 8px/15px "Noto Sans", sans-serif; }
.legend p { width: 84px; text-align: center; white-space: nowrap; }
.scale { display: flex; gap: 16px; margin: 6px 0 5px 32px; height: 223px; }
.ramp { width: 12px; margin: 5px 0; background: linear-gradient(#f00, #ff0 22%, #0f0 44%, #0ff 67%, #00f 89%, #b000ff); }
.legend ol { display: flex; flex-direction: column; justify-content: space-between; line-height: 10px; }

.right { width: 176px; flex: none; display: flex; flex-direction: column; padding: 0 2px 0 4px; }
.right .phead { padding: 0; }
.dock { flex: 1; display: flex; }
.vtabs { width: 11px; display: flex; flex-direction: column; }
.vtabs button { width: 10px; writing-mode: vertical-rl; transform: rotate(180deg); border: 1px solid; border-color: #333 #fff #fff #d4d0c8; border-width: 1px 1px 0 0; text-align: center; line-height: 8px; white-space: nowrap; }
.vtabs .cur { width: 11px; border-right-color: #fff; }
.h42 { height: 42px; } .h45 { height: 45px; } .h36 { height: 36px; } .h75 { height: 75px; } .h33 { height: 33px; }
.vtabs .more { margin-top: auto; margin-bottom: 1px; height: 14px; transform: none; writing-mode: horizontal-tb; border: 1px solid; border-color: #fff #555 #555 #fff; background: #e4e2de; display: flex; align-items: center; }
.more svg { width: 8px; height: 8px; }
.pane { flex: 1; display: flex; flex-direction: column; padding: 4px 4px 6px; border: 1px solid; border-color: #fff #777 #777 #fff; }
.cbox { flex: 1; background: #fff; border: 1px solid; border-color: #555 #eee #eee #555; margin: 2px 0 3px; }
.ctree { display: flex; flex-direction: column; height: 44px; padding: 1px 0 0 2px; }
.ctree li { flex: 1; display: flex; align-items: center; white-space: nowrap; min-height: 0; }
.ctree svg { width: 10px; height: 10px; margin-right: 3px; flex: none; }
.opt { display: flex; align-items: center; gap: 3px; height: 14px; }
.help { align-self: flex-end; width: 45px; height: 14px; margin-top: 1px; border: 1px solid; border-color: #fff #444 #444 #fff; }

.status { height: 14px; display: flex; justify-content: flex-end; padding: 1px 2px; }
.coords { display: flex; width: 212px; border: 1px solid; border-color: #777 #fff #fff #777; padding-left: 4px; line-height: 10px; }
.coords span { width: 59px; white-space: nowrap; }
.coords span:last-child { width: auto; }
```
